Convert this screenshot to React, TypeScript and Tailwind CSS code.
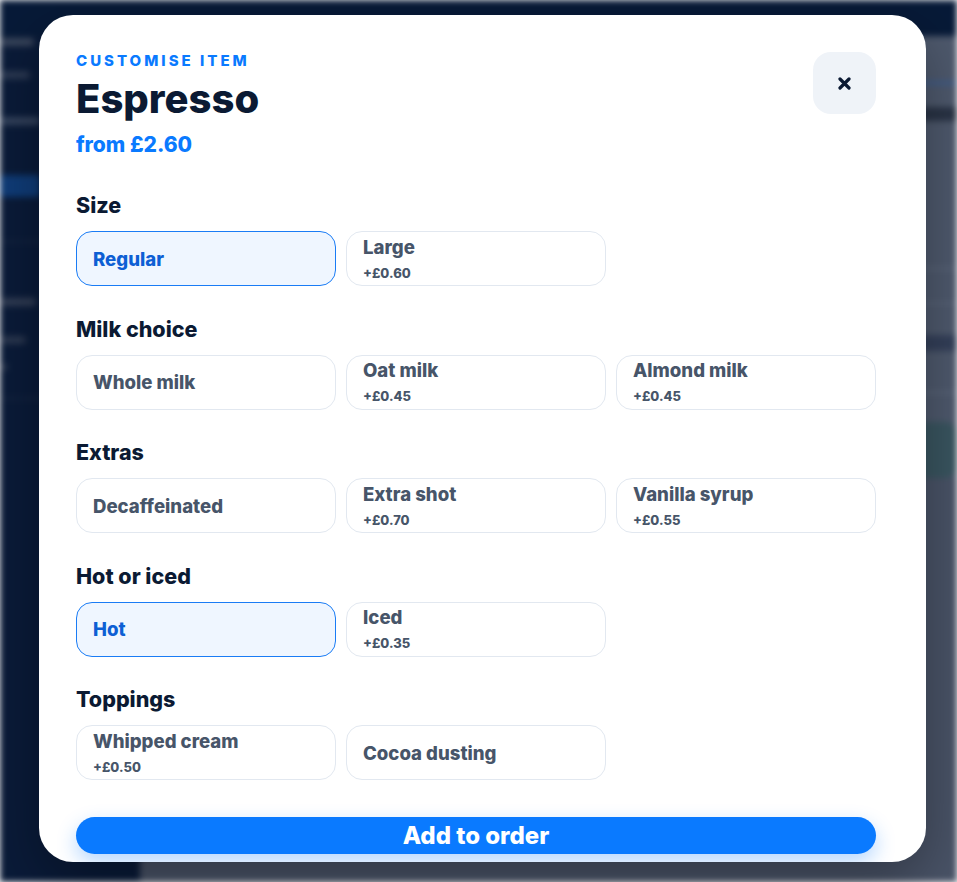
import React from "react";

type Opt = { label: string; price?: string; selected?: boolean };
type Section = { title: string; options: Opt[] };

const sections: Section[] = [
  { title: "Size", options: [{ label: "Regular", selected: true }, { label: "Large", price: "+£0.60" }] },
  {
    title: "Milk choice",
    options: [
      { label: "Whole milk" },
      { label: "Oat milk", price: "+£0.45" },
      { label: "Almond milk", price: "+£0.45" },
    ],
  },
  {
    title: "Extras",
    options: [
      { label: "Decaffeinated" },
      { label: "Extra shot", price: "+£0.70" },
      { label: "Vanilla syrup", price: "+£0.55" },
    ],
  },
  { title: "Hot or iced", options: [{ label: "Hot", selected: true }, { label: "Iced", price: "+£0.35" }] },
  {
    title: "Toppings",
    options: [{ label: "Whipped cream", price: "+£0.50" }, { label: "Cocoa dusting" }],
  },
];

function OptionCard({ o }: { o: Opt }) {
  return (
    <button
      className={
        "h-[55px] rounded-[16px] border px-[16px] flex flex-col justify-center items-start text-left gap-[11px] " +
        (o.selected
          ? "border-[#1a7cf5] bg-[#eff6ff] text-[#0d5fd4]"
          : "border-[#e2e8f0] bg-white text-[#475569]")
      }
    >
      <span className="text-[18.6px] leading-[18px] font-extrabold">{o.label}</span>
      {o.price && <span className="text-[13px] leading-[13px] font-extrabold">{o.price}</span>}
    </button>
  );
}

function Background() {
  return (
    <div className="h-[882px] w-full flex flex-col bg-[#4d586c] blur-[3px] overflow-hidden">
      <div className="h-[36px] shrink-0 bg-[#071a38]" />
      <div className="flex flex-1">
        <div className="w-[140px] shrink-0 bg-[#0a1b39] flex flex-col">
          <div className="mt-[2px] h-[8px] w-[34px] bg-[#3a465c] rounded" />
          <div className="mt-[25px] h-[8px] w-[30px] bg-[#2c3a53] rounded" />
          <div className="mt-[38px] h-[8px] w-[40px] bg-[#35445e] rounded" />
          <div className="mt-[50px] h-[22px] w-[40px] bg-[#0f3c78] rounded" />
          <div className="mt-[44px] h-[1px] w-full bg-[#24324a]" />
          <div className="mt-[56px] h-[8px] w-[36px] bg-[#323e55] rounded" />
          <div className="mt-[30px] h-[8px] w-[26px] bg-[#2b3850] rounded" />
          <div className="mt-[20px] h-[6px] w-[8px] bg-[#2b3850] rounded" />
          <div className="mt-[28px] h-[1px] w-full bg-[#24324a]" />
        </div>
        <div className="flex-1 flex flex-col bg-[#4f5a6e]">
          <div className="mt-[45px] h-[4px] w-full bg-[#3f5c8a]" />
          <div className="mt-[22px] h-[14px] w-full bg-[#2a3446]" />
          <div className="mt-[146px] h-[3px] w-full bg-[#5a6579]" />
          <div className="mt-[32px] h-[3px] w-full bg-[#5a6579]" />
          <div className="mt-[30px] h-[16px] w-full bg-[#34405a]" />
          <div className="mt-[40px] h-[3px] w-full bg-[#5a6579]" />
          <div className="mt-[28px] h-[56px] w-full bg-[#3a5661] rounded-[12px]" />
          <div className="flex-1 bg-[#4a5468]" />
        </div>
      </div>
    </div>
  );
}

export default function App() {
  return (
    <div className="relative w-full h-[882px] overflow-hidden font-['Inter',sans-serif]">
      <Background />
      <div className="absolute inset-0 pt-[15px] pl-[39px]">
        <div className="w-[887px] h-[847px] bg-white rounded-[34px] overflow-hidden pt-[37px] pl-[37px] pr-[50px] shadow-[0_20px_60px_rgba(0,0,0,0.35)]">
          <div className="flex justify-between items-start">
            <div className="flex flex-col">
              <div className="text-[15px] leading-[18px] font-extrabold tracking-[0.2em] text-[#0a7aff]">
                CUSTOMISE ITEM
              </div>
              <h1 className="mt-[7px] text-[40px] leading-[44px] font-extrabold text-[#0b1a33]">Espresso</h1>
              <div className="mt-[12px] text-[21px] leading-[24px] font-extrabold text-[#0a7aff]">from £2.60</div>
            </div>
            <button className="w-[63px] h-[62px] rounded-[18px] bg-[#eff3f8] flex items-center justify-center">
              <svg width="13" height="13" viewBox="0 0 13 13" fill="none">
                <path d="M2 2L11 11M11 2L2 11" stroke="#0b1a33" strokeWidth="3.2" strokeLinecap="round" />
              </svg>
            </button>
          </div>

          <div className="mt-[36px] flex flex-col gap-[30.5px]">
            {sections.map((s) => (
              <div key={s.title} className="flex flex-col">
                <h2 className="text-[21.5px] leading-[24px] font-extrabold text-[#0b1a33]">{s.title}</h2>
                <div className="mt-[14px] grid grid-cols-3 gap-[10px]">
                  {s.options.map((o) => (
                    <OptionCard key={o.label} o={o} />
                  ))}
                </div>
              </div>
            ))}
          </div>

          <button className="mt-[37px] w-full h-[37px] rounded-full bg-[#0a7aff] text-white text-[24px] font-extrabold flex items-center justify-center shadow-[0_8px_20px_rgba(10,122,255,0.3)]">
            Add to order
          </button>
        </div>
      </div>
    </div>
  );
}
